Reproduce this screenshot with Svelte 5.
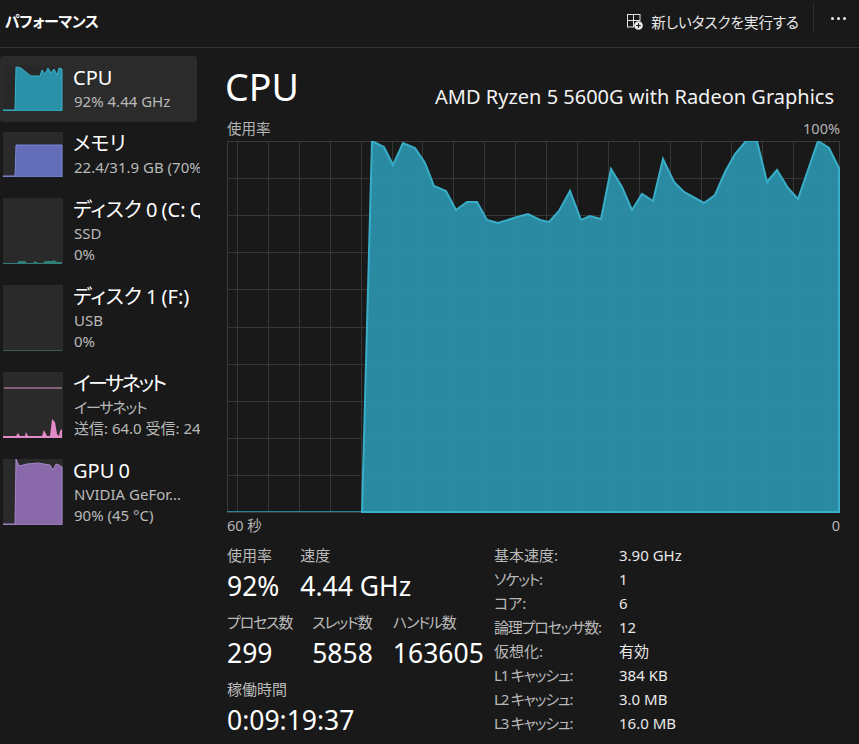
<script>
	const W = 612;
	const H = 371;
	// usage curve, in px inside the graph box
	const raw = [
		[135, 371], [145, 0], [157, 6], [166, 24], [176, 2], [188, 7], [198, 22], [207, 45], [219, 50], [229, 69],
		[240, 61], [250, 61], [260, 79], [271, 82], [290, 76], [301, 73], [313, 79], [322, 81], [332, 70], [343, 50],
		[354, 79], [363, 75], [374, 78], [384, 28], [395, 46], [405, 69], [415, 53], [426, 60], [436, 18], [447, 41],
		[457, 51], [477, 62], [488, 54], [498, 31], [508, 13], [519, 0], [530, 0], [540, 41], [550, 29], [561, 47],
		[571, 58], [591, 0], [602, 7], [612, 27], [612, 371]
	];
	const curve = raw.map((p) => p.join(',')).join(' ');
	const vLines = Array.from({ length: 20 }, (_, i) => 10 + i * 30.9);
	const hLines = Array.from({ length: 9 }, (_, i) => (i + 1) * 37.1);

	const items = [
		{ name: 'CPU', lines: ['92% 4.44 GHz'], h: 45, selected: true, color: 'cpu',
			pts: '0,44 12,44 13,1 18,2 24,7 28,10 32,10 37,10 39,4 42,8 45,2 48,7 51,3 54,9 56,2 59,3 59,45 0,45' },
		{ name: 'メモリ', lines: ['22.4/31.9 GB (70%)'], h: 45, color: 'mem',
			pts: '0,44 12,44 13,13 59,13 59,45 0,45' },
		{ name: 'ディスク 0 (C: Q', lines: ['SSD', '0%'], h: 66, color: 'disk',
			pts: '0,65 14,65 16,63 22,63 24,65 30,65 32,63 35,65 40,65 42,63 49,63 51,62 54,64 59,64 59,66 0,66' },
		{ name: 'ディスク 1 (F:)', lines: ['USB', '0%'], h: 66, color: 'usb',
			pts: '0,65 59,65 59,66 0,66' },
		{ name: 'イーサネット', kana: true, lines: ['イーサネット', '送信: 64.0 受信: 24'], h: 66, color: 'net',
			pts: '0,64 13,64 15,61 17,64 22,64 23,60 25,64 39,64 41,58 44,64 47,64 49,47 52,50 54,62 56,64 57,59 59,57 59,66 0,66' },
		{ name: 'GPU 0', lines: ['NVIDIA GeFor...', '90% (45 °C)'], h: 66, color: 'gpu',
			pts: '0,65 12,65 13,0 16,7 24,5 35,4 47,6 50,11 53,5 56,6 59,8 59,66 0,66' }
	];

	const details = [
		{ k: '基本速度:', v: '3.90 GHz' },
		{ k: 'ソケット:', v: '1', kana: true },
		{ k: 'コア:', v: '6' },
		{ k: '論理プロセッサ数:', v: '12', kana: true },
		{ k: '仮想化:', v: '有効' },
		{ k: 'L1 キャッシュ:', v: '384 KB', kana: true },
		{ k: 'L2 キャッシュ:', v: '3.0 MB', kana: true },
		{ k: 'L3 キャッシュ:', v: '16.0 MB', kana: true }
	];
</script>

<div class="app">
	<header class="topbar">
		<h1>パフォーマンス</h1>
		<button type="button" class="run">
			<svg width="16" height="16" viewBox="0 0 16 16" fill="none" stroke="#e4e4e4" stroke-width="1">
				<rect x="0.5" y="0.5" width="6" height="6" />
				<rect x="6.5" y="0.5" width="6.5" height="6" />
				<rect x="0.5" y="6.5" width="6" height="6.5" />
				<circle cx="11.5" cy="11.5" r="4.3" fill="#f0f0f0" stroke="none" />
				<path d="M11.5 9.2v4.6M9.2 11.5h4.6" stroke="#191919" stroke-width="1.2" />
			</svg>
			<span>新しいタスクを実行する</span>
		</button>
		<div class="sep"></div>
		<div class="more"><i></i><i></i><i></i></div>
	</header>

	<div class="body">
		<nav class="side">
			{#each items as item}
				<div class="row" class:selected={item.selected}>
					<svg class="thumb" width="60" height={item.h} viewBox="0 0 60 {item.h}">
						<rect x="0" y="0" width="60" height={item.h} class="thumb-bg" />
						{#if item.color === 'net'}
							<line x1="1" x2="59" y1="16" y2="16" class="net-line" />
						{/if}
						<polygon points={item.pts} class={item.color} />
					</svg>
					<div class="info">
						<div class="name" class:kana-big={item.kana}>{item.name}</div>
						{#each item.lines as line, i}
							<div class="sub" class:kana={item.kana && i === 0}>{line}</div>
						{/each}
					</div>
				</div>
			{/each}
		</nav>

		<main class="main">
			<div class="title-row">
				<h2>CPU</h2>
				<div class="model">AMD Ryzen 5 5600G with Radeon Graphics</div>
			</div>
			<div class="axis top"><span>使用率</span><span>100%</span></div>
			<svg class="graph" width={W + 1} height={H + 1} viewBox="0 0 {W + 1} {H + 1}">
				<rect x="0.5" y="0.5" width={W} height={H} class="frame" />
				{#each vLines as x}
					<line x1={Math.round(x) + 0.5} x2={Math.round(x) + 0.5} y1="0" y2={H} class="grid" />
				{/each}
				{#each hLines as y}
					<line x1="0" x2={W} y1={Math.round(y) + 0.5} y2={Math.round(y) + 0.5} class="grid" />
				{/each}
				<line x1="0" x2="136" y1={H - 0.5} y2={H - 0.5} class="base" />
				<polygon points={curve} class="usage" />
			</svg>
			<div class="axis bottom"><span>60 秒</span><span>0</span></div>

			<div class="stats">
				<div class="live">
					<div class="group first">
						<div class="stat"><span class="label">使用率</span><b>92%</b></div>
						<div class="stat"><span class="label">速度</span><b>4.44 GHz</b></div>
					</div>
					<div class="group">
						<div class="stat"><span class="label kana">プロセス数</span><b>299</b></div>
						<div class="stat"><span class="label kana">スレッド数</span><b>5858</b></div>
						<div class="stat"><span class="label kana">ハンドル数</span><b>163605</b></div>
					</div>
					<div class="group">
						<div class="stat"><span class="label">稼働時間</span><b>0:09:19:37</b></div>
					</div>
				</div>
				<dl class="details">
					{#each details as d}
						<dt class:kana={d.kana}>{d.k}</dt>
						<dd>{d.v}</dd>
					{/each}
				</dl>
			</div>
		</main>
	</div>
</div>

<style>
	:global(body) {
		background: #191919;
	}
	.app {
		width: 859px;
		height: 744px;
		overflow: hidden;
		background: #191919;
		color: #fff;
		font-family: 'Noto Sans', 'Noto Sans CJK JP', sans-serif;
		font-feature-settings: 'palt';
	}
	.topbar {
		display: flex;
		align-items: center;
		height: 47px;
		border-bottom: 1px solid #333;
		padding-left: 5px;
	}
	h1 {
		margin: 0 auto 5px 0;
		font-size: 15px;
		font-weight: 700;
		line-height: 36px;
		letter-spacing: -0.4px;
	}
	.run {
		display: flex;
		align-items: center;
		gap: 8px;
		padding: 0;
		margin: 0 14px 4px 0;
		background: none;
		border: none;
		color: #e8e8e8;
		font: inherit;
		font-size: 14.5px;
	}
	.sep {
		width: 1px;
		height: 31px;
		margin-bottom: 12px;
		background: #2e2e2e;
	}
	.more {
		display: flex;
		gap: 3px;
		margin: 0 13px 10px 17px;
	}
	.more i {
		width: 3px;
		height: 3px;
		border-radius: 50%;
		background: #eee;
	}
	.body {
		display: flex;
	}
	.side {
		width: 200px;
		padding-top: 8px;
		flex: none;
	}
	.row {
		position: relative;
		display: flex;
		align-items: flex-start;
		gap: 10px;
		padding: 10px 0 11px 3px;
	}
	.row.selected::before {
		content: '';
		position: absolute;
		inset: 0 3px 0 0;
		background: #2b2b2b;
		border-radius: 3px;
	}
	.thumb {
		position: relative;
		flex: none;
		display: block;
	}
	.thumb-bg {
		fill: #2a2a2a;
	}
	.selected .thumb-bg {
		fill: #282828;
	}
	.cpu {
		fill: #2b91a8;
		stroke: #38b2c9;
		stroke-width: 1;
	}
	.mem {
		fill: #636db8;
		stroke: #7a85d6;
		stroke-width: 1;
	}
	.disk {
		fill: #2f7f78;
	}
	.usb {
		fill: #3a5a5c;
	}
	.net {
		fill: #e38bc6;
	}
	.net-line {
		stroke: #d695bf;
		stroke-width: 1;
	}
	.gpu {
		fill: #8a69ab;
		stroke: #a387c4;
		stroke-width: 1;
	}
	.info {
		position: relative;
		flex: none;
		width: 127px;
		margin: -3px 0 -6px;
		overflow: hidden;
		white-space: nowrap;
	}
	.name {
		font-size: 20px;
		line-height: 29px;
		margin-bottom: -1px;
		word-spacing: -1px;
	}
	.kana-big {
		letter-spacing: -2.4px;
	}
	.sub {
		font-size: 15px;
		line-height: 21px;
		color: #b9b9b9;
		margin-left: 1px;
	}
	.kana {
		letter-spacing: -1.2px;
	}
	.main {
		width: 613px;
		margin-left: 27px;
		flex: none;
	}
	.title-row {
		display: flex;
		align-items: flex-start;
		justify-content: space-between;
		height: 70px;
		padding-right: 6px;
	}
	h2 {
		margin: 8px 0 0 -2px;
		font-size: 37.5px;
		font-weight: 400;
		line-height: 62px;
	}
	.model {
		font-size: 20px;
		line-height: 26px;
		margin-top: 36px;
		color: #f2f2f2;
	}
	.axis {
		display: flex;
		justify-content: space-between;
		font-size: 14.5px;
		color: #b4b4b4;
		line-height: 20px;
	}
	.axis.top {
		margin-bottom: 3px;
	}
	.graph {
		display: block;
	}
	.frame {
		fill: none;
		stroke: #3a3a3a;
	}
	.grid {
		stroke: #363636;
	}
	.base {
		stroke: #2b7f92;
	}
	.usage {
		fill: #2b8fa8;
		fill-opacity: 0.96;
		stroke: #39aec8;
		stroke-width: 2;
	}
	.axis.bottom {
		margin-top: 2px;
	}
	.stats {
		display: flex;
		margin-top: 10px;
	}
	.live {
		width: 267px;
		flex: none;
	}
	.group {
		display: flex;
		gap: 20px;
		height: 67px;
	}
	.group.first {
		gap: 21px;
	}
	.stat {
		display: flex;
		flex-direction: column;
	}
	.label {
		font-size: 15px;
		line-height: 20px;
		color: #b9b9b9;
	}
	b {
		font-weight: 400;
		font-size: 26.5px;
		line-height: 42px;
	}
	.details {
		margin: 0;
		display: grid;
		grid-template-columns: 125px 1fr;
		grid-auto-rows: 24px;
		font-size: 15px;
		line-height: 20px;
	}
	dt {
		color: #b9b9b9;
	}
	dd {
		margin: 0;
		color: #e8e8e8;
	}
</style>
